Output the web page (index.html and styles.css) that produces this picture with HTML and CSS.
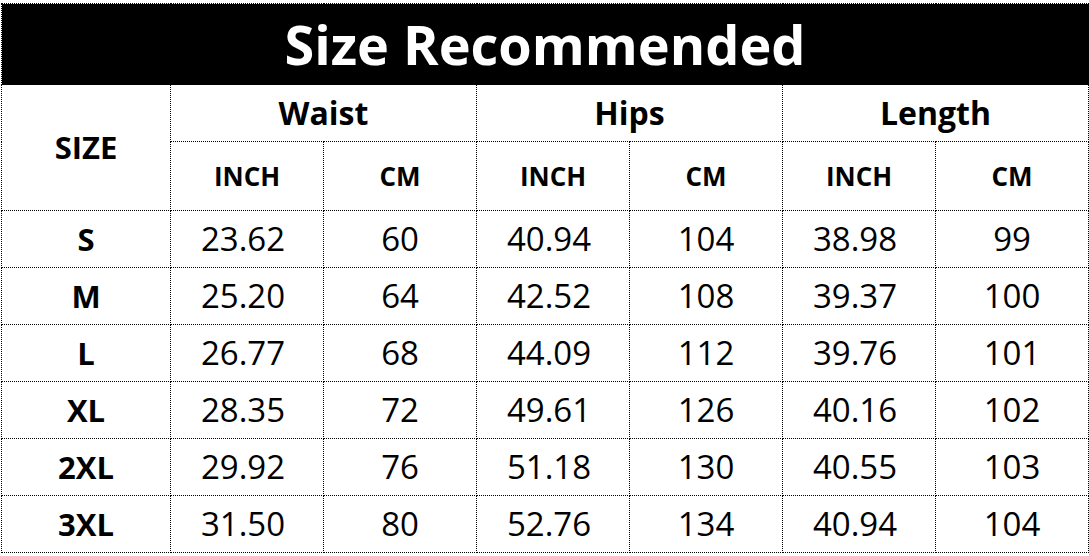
FILE: index.html
```html
<!DOCTYPE html>
<html>
<head>
<meta charset="utf-8">
<link rel="stylesheet" href="styles.css">
</head>
<body>
<table class="size-table">
  <colgroup>
    <col class="c-size">
    <col class="c-val"><col class="c-val"><col class="c-val"><col class="c-val"><col class="c-val"><col class="c-val">
  </colgroup>
  <tr class="title-row"><th colspan="7" class="title">Size Recommended</th></tr>
  <tr class="group-row">
    <th rowspan="2" class="size-head">SIZE</th>
    <th colspan="2" class="group">Waist</th>
    <th colspan="2" class="group">Hips</th>
    <th colspan="2" class="group">Length</th>
  </tr>
  <tr class="unit-row">
    <th class="unit">INCH</th><th class="unit">CM</th>
    <th class="unit">INCH</th><th class="unit">CM</th>
    <th class="unit">INCH</th><th class="unit">CM</th>
  </tr>
  <tr class="data-row"><th class="label">S</th><td class="inch">23.62</td><td>60</td><td class="inch">40.94</td><td>104</td><td class="inch">38.98</td><td>99</td></tr>
  <tr class="data-row"><th class="label">M</th><td class="inch">25.20</td><td>64</td><td class="inch">42.52</td><td>108</td><td class="inch">39.37</td><td>100</td></tr>
  <tr class="data-row"><th class="label">L</th><td class="inch">26.77</td><td>68</td><td class="inch">44.09</td><td>112</td><td class="inch">39.76</td><td>101</td></tr>
  <tr class="data-row"><th class="label">XL</th><td class="inch">28.35</td><td>72</td><td class="inch">49.61</td><td>126</td><td class="inch">40.16</td><td>102</td></tr>
  <tr class="data-row"><th class="label">2XL</th><td class="inch">29.92</td><td>76</td><td class="inch">51.18</td><td>130</td><td class="inch">40.55</td><td>103</td></tr>
  <tr class="data-row"><th class="label">3XL</th><td class="inch">31.50</td><td>80</td><td class="inch">52.76</td><td>134</td><td class="inch">40.94</td><td>104</td></tr>
</table>
</body>
</html>
```
FILE: styles.css
```css
html, body {
  margin: 0;
  padding: 0;
  background: #fff;
}
body {
  padding: 3px 0 0 1px;
  font-family: "Open Sans", "Noto Sans", sans-serif;
  color: #000;
}
.size-table {
  border-collapse: collapse;
  table-layout: fixed;
  width: 1087px;
}
.c-size { width: 169px; }
.c-val { width: 153px; }
.size-table th,
.size-table td {
  border: 1px dotted #000;
  padding: 0;
  text-align: center;
  vertical-align: middle;
  line-height: 1;
}
.title-row { height: 81px; }
.title {
  background: #000;
  color: #fff;
  font-size: 54px;
  font-weight: 700;
}
.group-row { height: 57px; }
.unit-row { height: 69px; }
.data-row { height: 57px; }
.group {
  font-size: 32px;
  font-weight: 700;
}
.size-head {
  font-size: 31px;
  font-weight: 700;
}
.unit {
  font-size: 26px;
  font-weight: 700;
}
.label {
  font-size: 31px;
  font-weight: 700;
}
.data-row td {
  font-size: 33px;
  font-weight: 400;
  padding-bottom: 2px;
}
.data-row td.inch {
  padding-right: 8px;
}
```
